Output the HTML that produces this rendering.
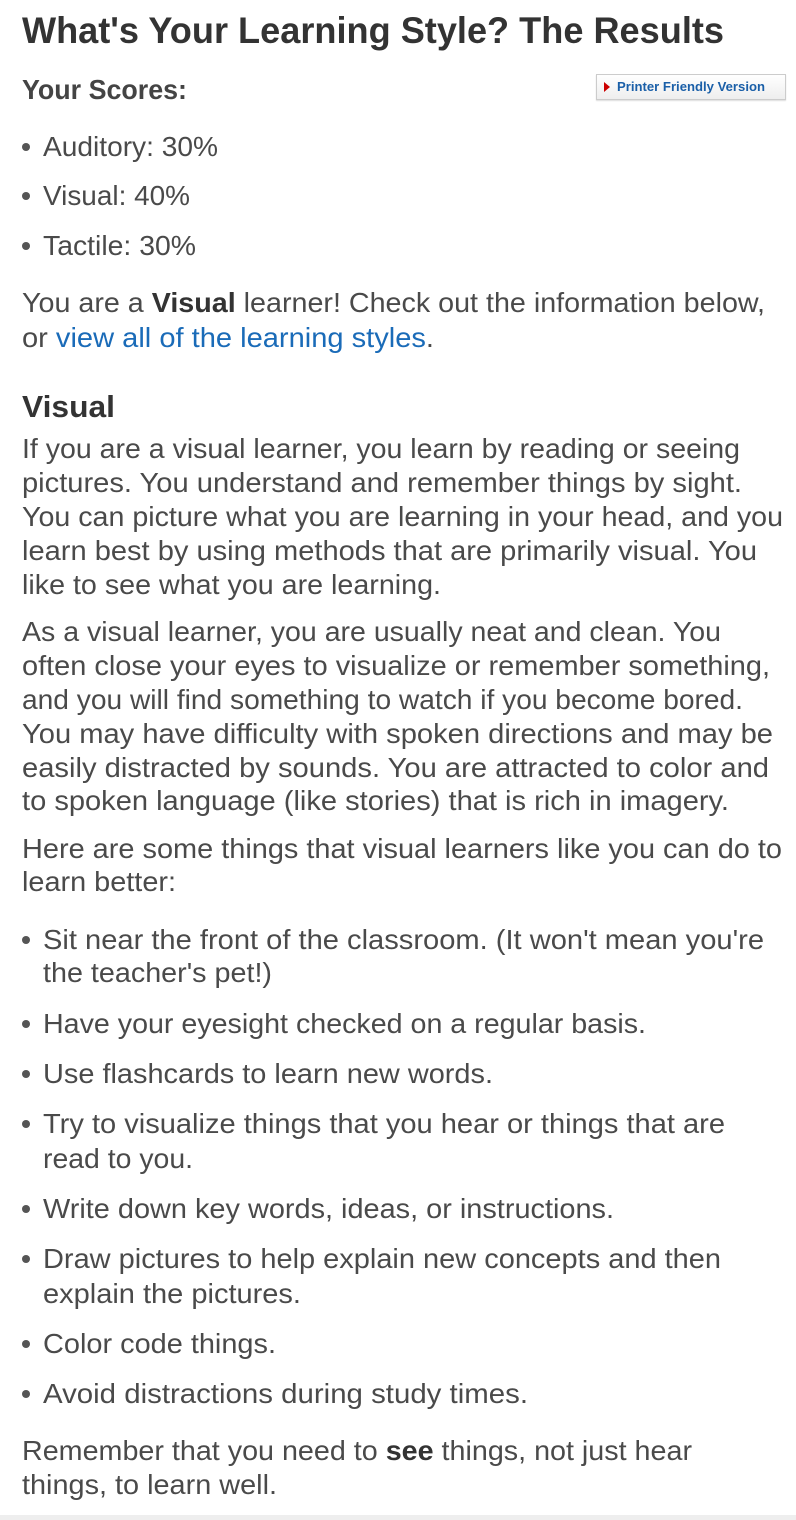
<!DOCTYPE html>
<html><head><meta charset="utf-8">
<style>
html,body{margin:0;padding:0;background:#fff;}
body{width:796px;height:1520px;position:relative;overflow:hidden;font-family:"Liberation Sans",Arial,sans-serif;color:#4a4a4a;}
.l{position:absolute;white-space:nowrap;font-size:28px;line-height:34px;transform-origin:0 50%;}
.b{font-weight:bold;}
.h1{font-size:37px;font-weight:bold;color:#333;line-height:44px;}
.h2{font-size:31px;font-weight:bold;color:#333;line-height:40px;}
.dot{position:absolute;width:8px;height:8px;border-radius:50%;background:#555;}
a{color:#1a6bb8;text-decoration:none;}
.btn{position:absolute;left:596px;top:74px;width:188px;height:24px;border:1px solid #ccc;background:linear-gradient(#fff,#eee);box-shadow:0 1px 1px #ddd;font-size:13px;font-weight:bold;color:#1a5fa8;line-height:24px;}
.tri{position:absolute;left:7px;top:7px;width:0;height:0;border-left:6px solid #c00;border-top:5px solid transparent;border-bottom:5px solid transparent;}
.rule{position:absolute;left:0;top:1515px;width:796px;height:5px;background:#eee;}
</style></head><body>
<div class="l h1" style="left:22px;top:9px;--w:702">What's Your Learning Style? The Results</div>
<div class="l b" style="left:22px;top:73px;--w:165;color:#444">Your Scores:</div>
<div class="btn"><span class="tri"></span><span class="l" style="left:20px;top:0;font-size:13px;line-height:24px;--w:148">Printer Friendly Version</span></div>

<div class="dot" style="left:22px;top:143px"></div><div class="l" style="left:43px;top:130px;--w:175">Auditory: 30%</div>
<div class="dot" style="left:22px;top:192px"></div><div class="l" style="left:43px;top:179px;--w:147">Visual: 40%</div>
<div class="dot" style="left:22px;top:242px"></div><div class="l" style="left:43px;top:229px;--w:153">Tactile: 30%</div>

<div class="l" style="left:22px;top:286px;--w:743">You are a <b style="color:#333">Visual</b> learner! Check out the information below,</div>
<div class="l" style="left:22px;top:321px;--w:412">or <a>view all of the learning styles</a>.</div>

<div class="l h2" style="left:22px;top:387px;--w:93">Visual</div>
<div class="l" style="left:22px;top:432px;--w:718">If you are a visual learner, you learn by reading or seeing</div>
<div class="l" style="left:22px;top:466px;--w:720">pictures. You understand and remember things by sight.</div>
<div class="l" style="left:22px;top:500px;--w:761">You can picture what you are learning in your head, and you</div>
<div class="l" style="left:22px;top:534px;--w:735">learn best by using methods that are primarily visual. You</div>
<div class="l" style="left:22px;top:568px;--w:419">like to see what you are learning.</div>

<div class="l" style="left:22px;top:615px;--w:699">As a visual learner, you are usually neat and clean. You</div>
<div class="l" style="left:22px;top:649px;--w:748">often close your eyes to visualize or remember something,</div>
<div class="l" style="left:22px;top:683px;--w:721">and you will find something to watch if you become bored.</div>
<div class="l" style="left:22px;top:717px;--w:751">You may have difficulty with spoken directions and may be</div>
<div class="l" style="left:22px;top:751px;--w:747">easily distracted by sounds. You are attracted to color and</div>
<div class="l" style="left:22px;top:784px;--w:707">to spoken language (like stories) that is rich in imagery.</div>

<div class="l" style="left:22px;top:832px;--w:760">Here are some things that visual learners like you can do to</div>
<div class="l" style="left:22px;top:865px;--w:154">learn better:</div>

<div class="dot" style="left:22px;top:936px"></div><div class="l" style="left:43px;top:923px;--w:721">Sit near the front of the classroom. (It won't mean you're</div>
<div class="l" style="left:43px;top:956px;--w:229">the teacher's pet!)</div>
<div class="dot" style="left:22px;top:1020px"></div><div class="l" style="left:43px;top:1007px;--w:603">Have your eyesight checked on a regular basis.</div>
<div class="dot" style="left:22px;top:1070px"></div><div class="l" style="left:43px;top:1057px;--w:450">Use flashcards to learn new words.</div>
<div class="dot" style="left:22px;top:1120px"></div><div class="l" style="left:43px;top:1107px;--w:682">Try to visualize things that you hear or things that are</div>
<div class="l" style="left:43px;top:1142px;--w:150">read to you.</div>
<div class="dot" style="left:22px;top:1205px"></div><div class="l" style="left:43px;top:1192px;--w:571">Write down key words, ideas, or instructions.</div>
<div class="dot" style="left:22px;top:1255px"></div><div class="l" style="left:43px;top:1242px;--w:678">Draw pictures to help explain new concepts and then</div>
<div class="l" style="left:43px;top:1277px;--w:258">explain the pictures.</div>
<div class="dot" style="left:22px;top:1340px"></div><div class="l" style="left:43px;top:1327px;--w:233">Color code things.</div>
<div class="dot" style="left:22px;top:1390px"></div><div class="l" style="left:43px;top:1377px;--w:485">Avoid distractions during study times.</div>

<div class="l" style="left:22px;top:1434px;--w:670">Remember that you need to <b style="color:#333">see</b> things, not just hear</div>
<div class="l" style="left:22px;top:1468px;--w:255">things, to learn well.</div>
<div class="rule"></div>
<script>
document.querySelectorAll('.l').forEach(function(e){
  var w=parseFloat(getComputedStyle(e).getPropertyValue('--w'));
  if(w){var r=e.getBoundingClientRect().width; if(r>0) e.style.transform='scaleX('+(w/r)+')';}
});
</script>
</body></html>
